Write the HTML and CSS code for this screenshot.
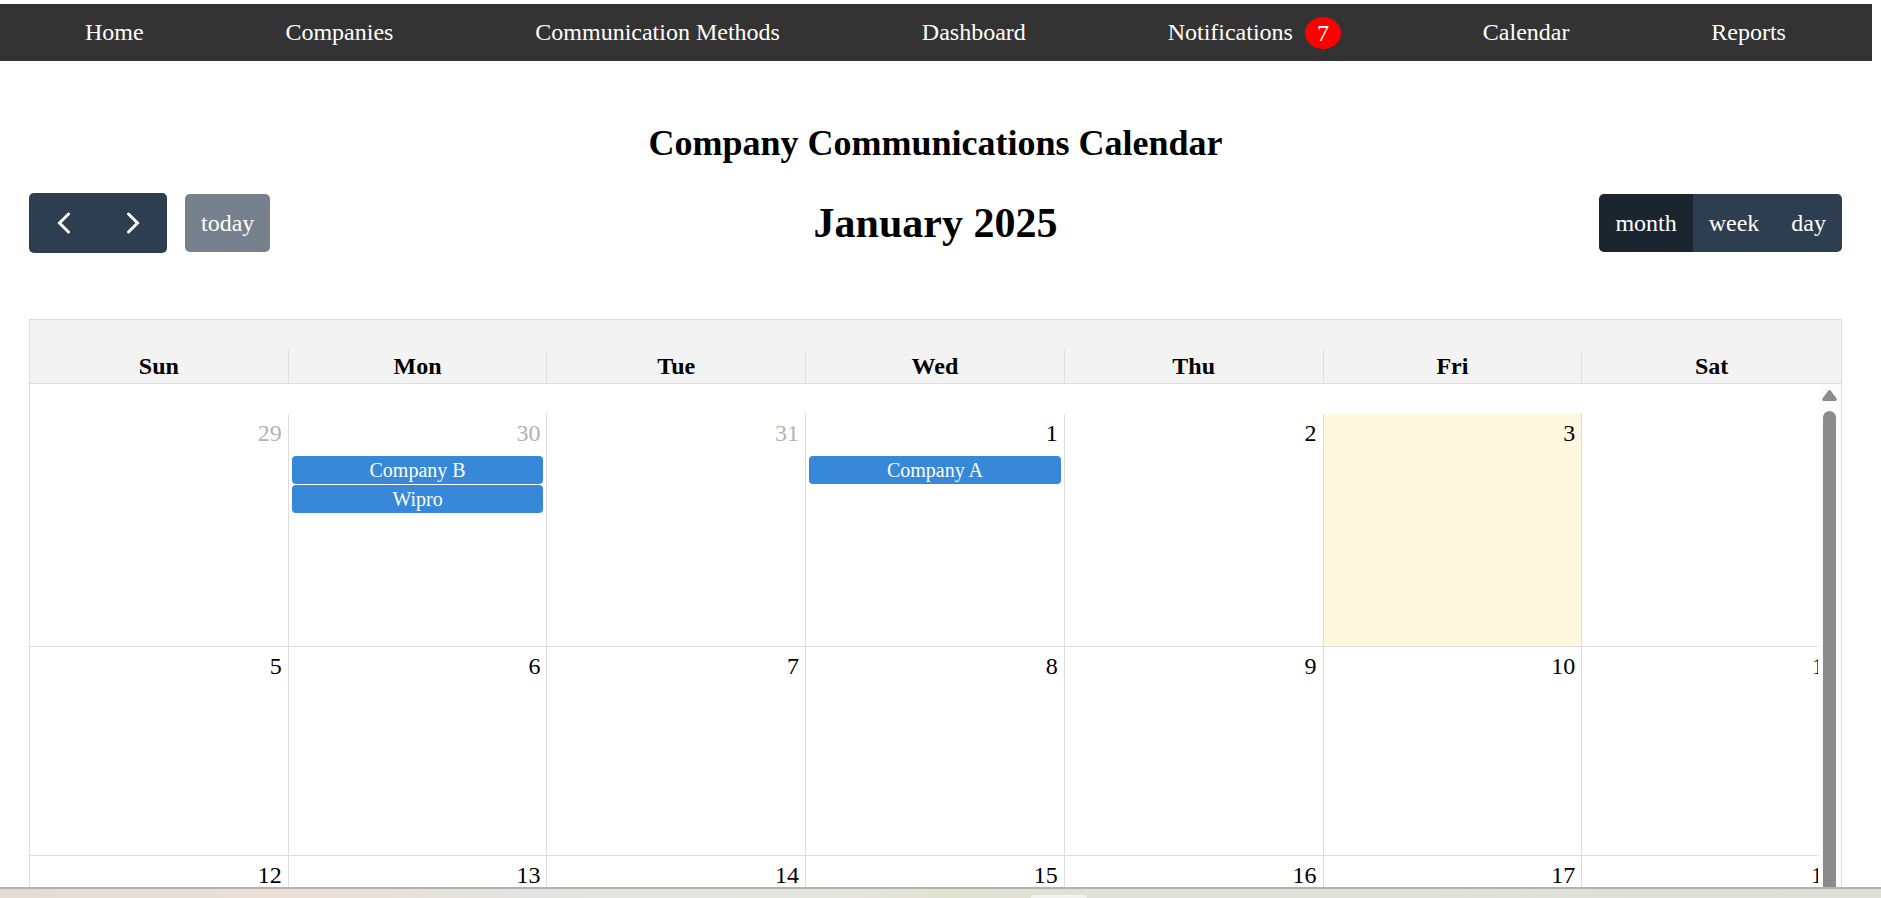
FILE: index.html
```html
<!DOCTYPE html>
<html lang="en">
<head>
<meta charset="utf-8">
<title>Company Communications Calendar</title>
<link rel="stylesheet" href="styles.css">
</head>
<body>
<nav class="nav">
  <a href="#">Home</a>
  <a href="#">Companies</a>
  <a href="#">Communication Methods</a>
  <a href="#">Dashboard</a>
  <a class="with-badge" href="#">Notifications<span class="badge">7</span></a>
  <a href="#">Calendar</a>
  <a href="#">Reports</a>
</nav>
<main class="page">
  <h1 class="page-title">Company Communications Calendar</h1>
  <div class="toolbar">
    <div class="toolbar-side">
      <div class="group">
        <button class="btn btn-icon" type="button" aria-label="Previous month"><svg class="chevron" viewBox="0 0 14 22"><path d="M11.500 2 2.500 11l9 9"/></svg></button>
        <button class="btn btn-icon" type="button" aria-label="Next month"><svg class="chevron" viewBox="0 0 14 22"><path d="M2.500 2l9 9-9 9"/></svg></button>
      </div>
      <button class="btn btn-today" type="button" disabled>today</button>
    </div>
    <h2 class="month">January 2025</h2>
    <div class="toolbar-side toolbar-end">
      <div class="group">
        <button class="btn btn-active" type="button">month</button>
        <button class="btn" type="button">week</button>
        <button class="btn" type="button">day</button>
      </div>
    </div>
  </div>
  <section class="calendar">
    <div class="head">
      <table class="grid">
        <thead><tr><th>Sun</th><th>Mon</th><th>Tue</th><th>Wed</th><th>Thu</th><th>Fri</th><th>Sat</th></tr></thead>
      </table>
    </div>
    <div class="body">
      <div class="viewport">
        <table class="grid days">
          <tbody>
            <tr class="first">
              <td class="other"><span class="num">29</span></td>
              <td><span class="num other">30</span><a class="event" href="#">Company B</a><a class="event" href="#">Wipro</a></td>
              <td class="other"><span class="num">31</span></td>
              <td><span class="num">1</span><a class="event" href="#">Company A</a></td>
              <td><span class="num">2</span></td>
              <td class="today"><span class="num">3</span></td>
              <td></td>
            </tr>
            <tr>
              <td><span class="num">5</span></td><td><span class="num">6</span></td><td><span class="num">7</span></td><td><span class="num">8</span></td><td><span class="num">9</span></td><td><span class="num">10</span></td><td><span class="num">11</span></td>
            </tr>
            <tr>
              <td><span class="num">12</span></td><td><span class="num">13</span></td><td><span class="num">14</span></td><td><span class="num">15</span></td><td><span class="num">16</span></td><td><span class="num">17</span></td><td><span class="num">18</span></td>
            </tr>
          </tbody>
        </table>
      </div>
      <div class="scrollbar">
        <svg class="arrow" viewBox="0 0 15 11"><path d="M6 1Q7.500-.8 9 1l5.500 7.500Q15.500 11 13 11H2Q-.5 11 .5 8.500Z"/></svg>
        <div class="thumb"></div>
      </div>
    </div>
  </section>
</main>
<footer class="strip"><div class="tab"></div></footer>
</body>
</html>
```
FILE: styles.css
```css
* { box-sizing: border-box; }

body {
  margin: 0;
  height: 100vh;
  padding-top: 4px;
  display: flex;
  flex-direction: column;
  overflow: hidden;
  background: #fff;
  color: #000;
  font-family: "Liberation Serif", "Times New Roman", serif;
  font-size: 24px;
}

.nav {
  flex: none;
  display: flex;
  justify-content: space-around;
  align-items: center;
  height: 57px;
  margin-right: 9px;
  padding: 0 15px 0 14px;
  background: #333;
}

.nav a {
  color: #fff;
  text-decoration: none;
  white-space: nowrap;
}

.with-badge {
  display: flex;
  align-items: center;
}

.badge {
  margin-left: 12px;
  padding: 2px 12px;
  border-radius: 50%;
  background: red;
  line-height: 28px;
}

.page {
  flex: 1;
  min-height: 0;
  display: flex;
  flex-direction: column;
  padding: 61px 39px 0 29px;
}

.page-title {
  margin: 0 0 29px;
  text-align: center;
  font-size: 36px;
  line-height: 42px;
}

.toolbar {
  display: flex;
  align-items: center;
  margin-bottom: 66px;
}

.toolbar-side {
  flex: 1;
  display: flex;
  align-items: center;
  gap: 18px;
}

.toolbar-end { justify-content: flex-end; }

.month {
  margin: 0;
  font-size: 42px;
  line-height: 48px;
}

.group {
  display: flex;
  border-radius: 5px;
  overflow: hidden;
}

.btn {
  border: 0;
  padding: 10px 16px;
  background: #2c3e50;
  color: #fff;
  font: inherit;
  line-height: 38px;
}

.btn-icon {
  display: flex;
  align-items: center;
  justify-content: center;
  width: 69px;
  height: 60px;
}

.chevron {
  width: 14px;
  height: 22px;
  fill: none;
  stroke: #fff;
  stroke-width: 3;
  stroke-linecap: round;
}

.btn-today {
  border-radius: 5px;
  background: #76818d;
}

.btn-active { background: #1a252f; }

.calendar {
  flex: 1;
  min-height: 0;
  display: flex;
  flex-direction: column;
  border: 1px solid #ddd;
  border-bottom: 0;
}

.head {
  padding-top: 30px;
  border-bottom: 1px solid #ddd;
  background: #f3f3f3;
}

.grid {
  width: 100%;
  table-layout: fixed;
  border-collapse: separate;
  border-spacing: 0;
}

.grid th {
  height: 33px;
  padding: 0 0 2px;
  border-right: 1px solid #ddd;
  line-height: 30px;
}

.grid td {
  height: 209px;
  padding: 5px 3px 0;
  border-right: 1px solid #ddd;
  border-bottom: 1px solid #ddd;
  vertical-align: top;
}

.grid .first td { height: 233px; }

.grid th:last-child,
.grid td:last-child { border-right: 0; }

.num {
  display: block;
  padding-right: 3px;
  margin-bottom: 9px;
  text-align: right;
  line-height: 28px;
}

.other { color: #b3b3b3; }
.today { background: #fff8df; }

.event {
  display: block;
  margin-bottom: 1px;
  border-radius: 4px;
  background: #3788d8;
  color: #fff;
  text-align: center;
  text-decoration: none;
  font-size: 20px;
  line-height: 28px;
}

.body {
  flex: 1;
  min-height: 0;
  display: flex;
}

.viewport {
  flex: 1;
  min-width: 0;
  overflow: hidden;
  padding-top: 30px;
}

.days { width: calc(100% + 23px); }

.scrollbar {
  width: 23px;
  display: flex;
  flex-direction: column;
  align-items: center;
  gap: 10px;
  padding-top: 6px;
  background: #fcfcfc;
}

.arrow {
  flex: none;
  width: 15px;
  height: 11px;
  fill: #8b8b8b;
}

.thumb {
  flex: 1;
  width: 13px;
  border-radius: 7px 7px 0 0;
  background: #8b8b8b;
}

.strip {
  flex: none;
  display: flex;
  justify-content: center;
  align-items: flex-end;
  height: 11px;
  border-top: 2px solid #b3b2ac;
  background: linear-gradient(90deg, #e4dcd4, #ecdfd5 17%, #e4e4e2 28%, #e6e6e0 45%, #e0e2d0 50%, #dfe0d8 60%, #dedfd6);
}

.tab {
  width: 56px;
  height: 3px;
  margin-left: 237px;
  border-radius: 4px 4px 0 0;
  background: #f2f2ee;
}
```
